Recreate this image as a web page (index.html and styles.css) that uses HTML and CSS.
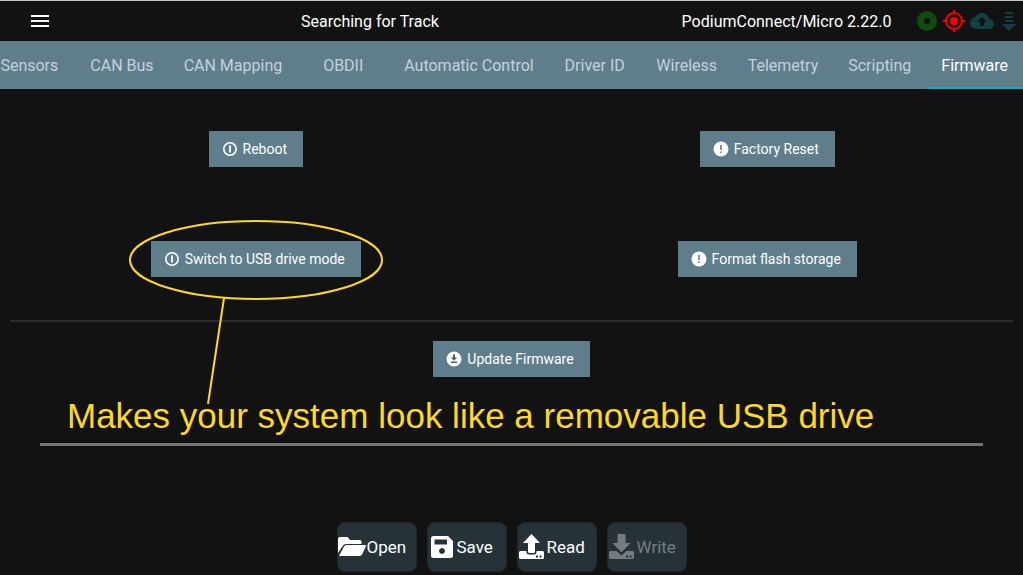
FILE: index.html
```html
<!DOCTYPE html>
<html lang="en">
<head>
<meta charset="utf-8">
<meta name="viewport" content="width=device-width, initial-scale=1">
<title>Firmware</title>
<link rel="stylesheet" href="styles.css">
</head>
<body>
<div class="app">
  <header class="topbar">
    <button class="menu" type="button" aria-label="Menu">
      <svg width="18" height="12" viewBox="0 0 18 12" fill="currentColor"><path d="M0 0h18v2H0zM0 5h18v2H0zM0 10h18v2H0z"/></svg>
    </button>
    <div class="status">Searching for Track</div>
    <div class="device">PodiumConnect/Micro 2.22.0</div>
    <div class="indicators">
      <svg width="20" height="20" viewBox="0 0 20 20"><circle cx="10" cy="10" r="6.5" fill="none" stroke="#104a10" stroke-width="7"/></svg>
      <svg width="22" height="22" viewBox="0 0 22 22" fill="none" stroke="#ff0000" stroke-width="2"><circle cx="11" cy="11" r="8"/><circle cx="11" cy="11" r="4" fill="#ff0000" stroke="none"/><path d="M11 0v4M11 18v4M0 11h4M18 11h4"/></svg>
      <svg width="24" height="16" viewBox="0 4 24 16" fill="#0f4244"><path d="M19.35 10.04C18.67 6.59 15.64 4 12 4 9.11 4 6.6 5.64 5.35 8.04 2.34 8.36 0 10.91 0 14c0 3.31 2.69 6 6 6h13c2.76 0 5-2.24 5-5 0-2.64-2.05-4.78-4.65-4.96zM14 13v4h-4v-4H7l5-5 5 5h-3z"/></svg>
      <svg width="14" height="20" viewBox="0 0 14 20" fill="#123c46"><path d="M3 1h8v2H3zM3 5h8v2H3zM3 9h8v2H3zM0 13h14l-7 7z"/></svg>
    </div>
  </header>

  <nav class="tabs">
    <button class="tab" type="button">Sensors</button>
    <button class="tab" type="button">CAN Bus</button>
    <button class="tab" type="button">CAN Mapping</button>
    <button class="tab" type="button">OBDII</button>
    <button class="tab" type="button">Automatic Control</button>
    <button class="tab" type="button">Driver ID</button>
    <button class="tab" type="button">Wireless</button>
    <button class="tab" type="button">Telemetry</button>
    <button class="tab" type="button">Scripting</button>
    <button class="tab tab-active" type="button" aria-current="page">Firmware</button>
  </nav>

  <main class="content">
    <div class="actions">
      <div class="cell">
        <button class="action" type="button">
          <svg class="icon" viewBox="0 0 16 16" fill="none" stroke="currentColor"><circle cx="8" cy="8" r="6.2" stroke-width="1.6"/><path d="M8 4.5v7" stroke-width="1.8"/></svg>
          Reboot
        </button>
      </div>
      <div class="cell">
        <button class="action" type="button">
          <svg class="icon" viewBox="0 0 16 16"><circle cx="8" cy="8" r="7.5" fill="currentColor"/><path d="M8 4v5M8 10.4v1.6" stroke="#607d8b" stroke-width="1.6"/></svg>
          Factory Reset
        </button>
      </div>
      <div class="cell">
        <div class="marked">
          <button class="action" type="button">
            <svg class="icon" viewBox="0 0 16 16" fill="none" stroke="currentColor"><circle cx="8" cy="8" r="6.2" stroke-width="1.6"/><path d="M8 4.5v7" stroke-width="1.8"/></svg>
            Switch to USB drive mode
          </button>
          <svg class="callout" width="256" height="186" viewBox="0 0 256 186" fill="none" stroke="#fdd922" stroke-width="2"><ellipse cx="128" cy="41" rx="126" ry="39"/><path d="M96 79L80 185"/></svg>
        </div>
      </div>
      <div class="cell">
        <button class="action" type="button">
          <svg class="icon" viewBox="0 0 16 16"><circle cx="8" cy="8" r="7.5" fill="currentColor"/><path d="M8 4v5M8 10.4v1.6" stroke="#607d8b" stroke-width="1.6"/></svg>
          Format flash storage
        </button>
      </div>
    </div>
    <hr class="divider">
    <div class="update">
      <button class="action" type="button">
        <svg class="icon" viewBox="0 0 16 16"><circle cx="8" cy="8" r="7.5" fill="currentColor"/><path d="M7 3.5h2v3h2.2L8 9.7 4.8 6.5H7zM5 10.5h6V12H5z" fill="#455f6c"/></svg>
        Update Firmware
      </button>
      <p class="note">Makes your system look like a removable USB drive</p>
    </div>
    <hr class="progress">
  </main>

  <footer class="toolbar">
    <button class="tool" type="button">
      <svg width="28" height="20" viewBox="0 0 28 20" fill="currentColor"><path d="M0 16V2Q0 0 2 0h7q1 0 1.500 1L12 3h10q1.500 0 1.500 1.500V7H8Q6 7 5 8.500z"/><path d="M1 19L6 9.500Q6.800 8 8.500 8H27q1.500 0 .8 1.500L24 17.500Q23 19 21.500 19z"/></svg>
      <span>Open</span>
    </button>
    <button class="tool" type="button">
      <svg width="22" height="22" viewBox="0 0 22 22" fill="currentColor" fill-rule="evenodd"><path d="M2.500 0H17l5 5v14.500q0 2.500-2.500 2.500h-17Q0 22 0 19.500v-17Q0 0 2.500 0zM3.500 3.500v5H16v-5zM11 12a3 3 0 1 0 .01 0z"/></svg>
      <span>Save</span>
    </button>
    <button class="tool" type="button">
      <svg width="25" height="26" viewBox="0 0 25 26" fill="currentColor" fill-rule="evenodd"><path d="M12.500 0L21 9h-5v8.500q0 1.500-1.500 1.500h-4Q9 19 9 17.500V9H4z"/><path d="M1.500 17H7.500v1q0 2.500 2.500 2.500h5q2.500 0 2.500-2.500v-1h6q1.500 0 1.500 1.500v5q0 1.500-1.500 1.500h-22Q0 25 0 23.500v-5Q0 17 1.500 17zM17 21.500v2h2v-2zM20.500 21.500v2h2v-2z"/></svg>
      <span>Read</span>
    </button>
    <button class="tool" type="button" disabled>
      <svg width="25" height="26" viewBox="0 0 25 26" fill="currentColor" fill-rule="evenodd"><path d="M9.500 0h6q1 0 1 1v8h5l-9 9.500L3.500 9h5V1q0-1 1-1z"/><path d="M1.500 17H7.500l5 4.500L17.500 17h6q1.500 0 1.500 1.500v5q0 1.500-1.500 1.500h-22Q0 25 0 23.500v-5Q0 17 1.500 17zM17 21.500v2h2v-2zM20.500 21.500v2h2v-2z"/></svg>
      <span>Write</span>
    </button>
  </footer>
</div>
</body>
</html>
```
FILE: styles.css
```css
* {
  box-sizing: border-box;
}

body {
  margin: 0;
  background: #121212;
  color: #fff;
  font-family: Roboto, "Liberation Sans", sans-serif;
  font-size: 16px;
}

button {
  margin: 0;
  padding: 0;
  border: 0;
  background: none;
  color: inherit;
  font: inherit;
  white-space: nowrap;
}

svg {
  display: block;
  flex: none;
}

.app {
  display: flex;
  flex-direction: column;
  min-height: 100vh;
  overflow: hidden;
}

.topbar {
  display: grid;
  grid-template-columns: 80px 580fr 253fr 110px;
  align-items: center;
  height: 41px;
  border-top: 1px solid #bfc4c4;
}

.menu {
  display: flex;
  justify-content: center;
}

.status,
.device {
  text-align: center;
  white-space: nowrap;
}

.indicators {
  display: grid;
  grid-template-columns: repeat(4, 1fr);
  align-items: center;
  justify-items: center;
}

.tabs {
  display: flex;
  justify-content: flex-end;
  height: 48px;
  background: #607d8b;
}

.tab {
  flex: none;
  min-width: 92px;
  padding: 2px 15px 0;
  border-bottom: 2px solid transparent;
  color: #c3d2db;
}

.tab-active {
  border-bottom-color: #1fa9be;
  color: #fff;
}

.content {
  flex: 1;
}

.actions {
  display: grid;
  grid-template-columns: 1fr 1fr;
  grid-auto-rows: 110px;
  padding: 5px 0 6px;
}

.cell {
  display: flex;
  align-items: center;
  justify-content: center;
}

.action {
  display: flex;
  align-items: center;
  gap: 5px;
  height: 36px;
  padding: 0 16px 0 13px;
  background: #607d8b;
  font-size: 14px;
}

.icon {
  width: 16px;
  height: 16px;
}

.marked {
  position: relative;
}

.callout {
  position: absolute;
  top: -22px;
  left: -23px;
  pointer-events: none;
}

.divider {
  height: 2px;
  margin: 0 10px;
  border: 0;
  background: #2b2b2b;
}

.update {
  position: relative;
  display: flex;
  justify-content: center;
  padding: 19px 0 66px;
}

.note {
  position: absolute;
  top: 74px;
  left: 67px;
  margin: 0;
  color: #fdd922;
  font-family: "Liberation Sans", Arial, sans-serif;
  font-size: 35px;
  line-height: 40px;
  white-space: nowrap;
}

.progress {
  height: 3px;
  margin: 0 40px;
  border: 0;
  background: #747474;
}

.toolbar {
  display: flex;
  justify-content: center;
  gap: 10px;
  padding-bottom: 3px;
}

.tool {
  display: grid;
  grid-template-columns: 28px 1fr;
  align-items: center;
  justify-items: center;
  gap: 1px;
  width: 80px;
  height: 50px;
  border: 1px solid #1e282d;
  border-radius: 8px;
  background: #263238;
  font-size: 17px;
}

.tool span {
  justify-self: start;
}

.tool:disabled {
  color: #757d81;
}
```
